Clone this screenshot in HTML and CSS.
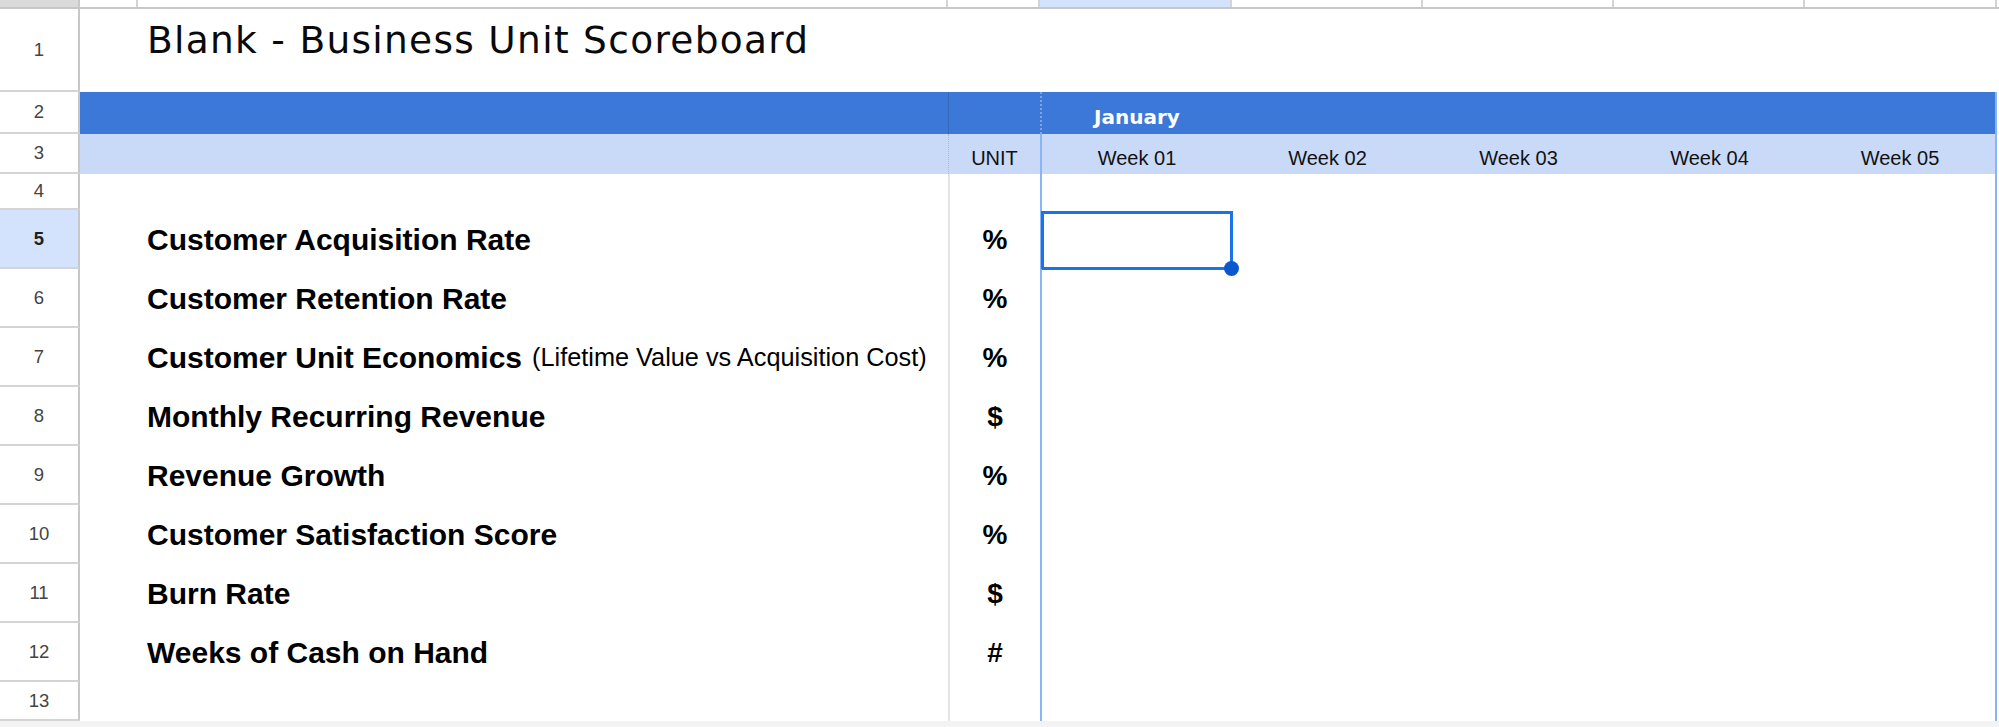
FILE: index.html
```html
<!DOCTYPE html>
<html lang="en">

<head>
  <meta charset="UTF-8">
  <meta name="viewport" content="width=device-width, initial-scale=1.0">
  <title>Blank - Business Unit Scoreboard</title>
  <link rel="stylesheet" href="styles.css">
</head>

<body>
  <div class="sheet">
    <div class="row heads">
      <div class="corner"></div>
      <div class="ch"></div>
      <div class="ch"></div>
      <div class="ch"></div>
      <div class="ch active"></div>
      <div class="ch"></div>
      <div class="ch"></div>
      <div class="ch"></div>
      <div class="ch"></div>
    </div>

    <div class="row r-title">
      <div class="rh">1</div>
      <div class="title">Blank - Business Unit Scoreboard</div>
    </div>

    <div class="row r-month">
      <div class="rh">2</div>
      <div class="cell"></div>
      <div class="cell"></div>
      <div class="cell unit"></div>
      <div class="cell week month">January</div>
      <div class="cell"></div>
      <div class="cell"></div>
      <div class="cell"></div>
      <div class="cell last"></div>
    </div>

    <div class="row r-weeks">
      <div class="rh">3</div>
      <div class="cell"></div>
      <div class="cell"></div>
      <div class="cell unit">UNIT</div>
      <div class="cell week">Week 01</div>
      <div class="cell">Week 02</div>
      <div class="cell">Week 03</div>
      <div class="cell">Week 04</div>
      <div class="cell last">Week 05</div>
    </div>

    <div class="row r-gap">
      <div class="rh">4</div>
      <div class="cell"></div>
      <div class="cell"></div>
      <div class="cell unit"></div>
      <div class="cell week"></div>
      <div class="cell"></div>
      <div class="cell"></div>
      <div class="cell"></div>
      <div class="cell last"></div>
    </div>

    <div class="row r-metric">
      <div class="rh selected">5</div>
      <div class="cell"></div>
      <div class="cell label">Customer Acquisition Rate</div>
      <div class="cell unit">%</div>
      <div class="cell week">
        <div class="selection"><span class="handle"></span></div>
      </div>
      <div class="cell"></div>
      <div class="cell"></div>
      <div class="cell"></div>
      <div class="cell last"></div>
    </div>

    <div class="row r-metric">
      <div class="rh">6</div>
      <div class="cell"></div>
      <div class="cell label">Customer Retention Rate</div>
      <div class="cell unit">%</div>
      <div class="cell week"></div>
      <div class="cell"></div>
      <div class="cell"></div>
      <div class="cell"></div>
      <div class="cell last"></div>
    </div>

    <div class="row r-metric">
      <div class="rh">7</div>
      <div class="cell"></div>
      <div class="cell label">Customer Unit Economics <small>(Lifetime Value vs Acquisition Cost)</small></div>
      <div class="cell unit">%</div>
      <div class="cell week"></div>
      <div class="cell"></div>
      <div class="cell"></div>
      <div class="cell"></div>
      <div class="cell last"></div>
    </div>

    <div class="row r-metric">
      <div class="rh">8</div>
      <div class="cell"></div>
      <div class="cell label">Monthly Recurring Revenue</div>
      <div class="cell unit">$</div>
      <div class="cell week"></div>
      <div class="cell"></div>
      <div class="cell"></div>
      <div class="cell"></div>
      <div class="cell last"></div>
    </div>

    <div class="row r-metric">
      <div class="rh">9</div>
      <div class="cell"></div>
      <div class="cell label">Revenue Growth</div>
      <div class="cell unit">%</div>
      <div class="cell week"></div>
      <div class="cell"></div>
      <div class="cell"></div>
      <div class="cell"></div>
      <div class="cell last"></div>
    </div>

    <div class="row r-metric">
      <div class="rh">10</div>
      <div class="cell"></div>
      <div class="cell label">Customer Satisfaction Score</div>
      <div class="cell unit">%</div>
      <div class="cell week"></div>
      <div class="cell"></div>
      <div class="cell"></div>
      <div class="cell"></div>
      <div class="cell last"></div>
    </div>

    <div class="row r-metric">
      <div class="rh">11</div>
      <div class="cell"></div>
      <div class="cell label">Burn Rate</div>
      <div class="cell unit">$</div>
      <div class="cell week"></div>
      <div class="cell"></div>
      <div class="cell"></div>
      <div class="cell"></div>
      <div class="cell last"></div>
    </div>

    <div class="row r-metric">
      <div class="rh">12</div>
      <div class="cell"></div>
      <div class="cell label">Weeks of Cash on Hand</div>
      <div class="cell unit">#</div>
      <div class="cell week"></div>
      <div class="cell"></div>
      <div class="cell"></div>
      <div class="cell"></div>
      <div class="cell last"></div>
    </div>

    <div class="row r-end">
      <div class="rh">13</div>
      <div class="cell"></div>
      <div class="cell"></div>
      <div class="cell unit"></div>
      <div class="cell week"></div>
      <div class="cell"></div>
      <div class="cell"></div>
      <div class="cell"></div>
      <div class="cell last"></div>
    </div>
  </div>
  <div class="scroll-edge"></div>
</body>

</html>
```

FILE: styles.css
```css
* {
  box-sizing: border-box;
}

body {
  margin: 0;
  background-color: #fff;
  font-family: "Liberation Sans", Arial, sans-serif;
  color: #000;
}

.sheet {
  width: 1999px;
}

.row {
  display: grid;
  grid-template-columns: 80px 58px 810px 92px 192px 191px 191px 191px 192px;
}

/* column header strip (cut off at the top) */
.heads {
  height: 9px;
  border-bottom: 2px solid #c7c7c7;
}

.corner {
  background-color: #dadada;
  border-right: 2px solid #c7c7c7;
}

.ch {
  border-right: 2px solid #d4d4d4;
}

.ch.active {
  background-color: #d3e3fd;
}

/* row headers */
.rh {
  display: flex;
  align-items: center;
  justify-content: center;
  background-color: #fff;
  border-right: 2px solid #c7c7c7;
  border-bottom: 2px solid #d4d4d4;
  font-size: 18.5px;
  color: #444;
}

.rh.selected {
  background-color: #d3e3fd;
  font-weight: bold;
  color: #1f1f1f;
}

.cell {
  display: flex;
  align-items: center;
  justify-content: center;
}

.r-title {
  height: 83px;
}

.title {
  grid-column: 2 / -1;
  padding: 13px 0 0 67px;
  font-family: "DejaVu Sans", sans-serif;
  font-size: 37.5px;
  line-height: 1;
  letter-spacing: 1.3px;
  color: #0a0a0a;
}

.r-month {
  height: 42px;
}

.r-month .cell {
  background-color: #3c78d8;
}

.r-month .unit {
  border-left: 1px solid #3569bd;
}

.r-month .cell.week {
  border-left: 2px dotted #7ea4e6;
}

.month {
  align-items: flex-end;
  padding-bottom: 5px;
  font-family: "DejaVu Sans", sans-serif;
  font-weight: bold;
  font-size: 20px;
  color: #fff;
}

.r-weeks {
  height: 40px;
}

.r-weeks .cell {
  align-items: flex-end;
  padding-bottom: 4px;
  background-color: #c9daf8;
  font-size: 20px;
  color: #111;
}

.r-weeks .unit {
  border-left: 1px dotted #b0b8c8;
}

.r-gap {
  height: 36px;
}

.r-metric {
  height: 59px;
}

.r-end {
  height: 39px;
}

.unit {
  border-left: 2px solid #e3e3e3;
}

.cell.week {
  border-left: 2px solid #8ab4f8;
}

.cell.last {
  border-right: 2px solid #8ab4f8;
}

.r-metric .unit {
  font-weight: bold;
  font-size: 28px;
}

.label {
  justify-content: flex-start;
  padding-left: 9px;
  font-weight: bold;
  font-size: 30px;
  white-space: nowrap;
}

.label small {
  margin-left: 10px;
  font-weight: normal;
  font-size: 25.3px;
}

/* active cell box with fill handle */
.week {
  position: relative;
}

.selection {
  position: absolute;
  top: 1px;
  left: -1px;
  right: -1px;
  bottom: -1px;
  border: 3px solid #1a73e8;
}

.handle {
  position: absolute;
  right: -9px;
  bottom: -9px;
  width: 15px;
  height: 15px;
  border-radius: 50%;
  background-color: #0b57d0;
}

.scroll-edge {
  height: 10px;
  background-color: #f3f3f3;
}
```
